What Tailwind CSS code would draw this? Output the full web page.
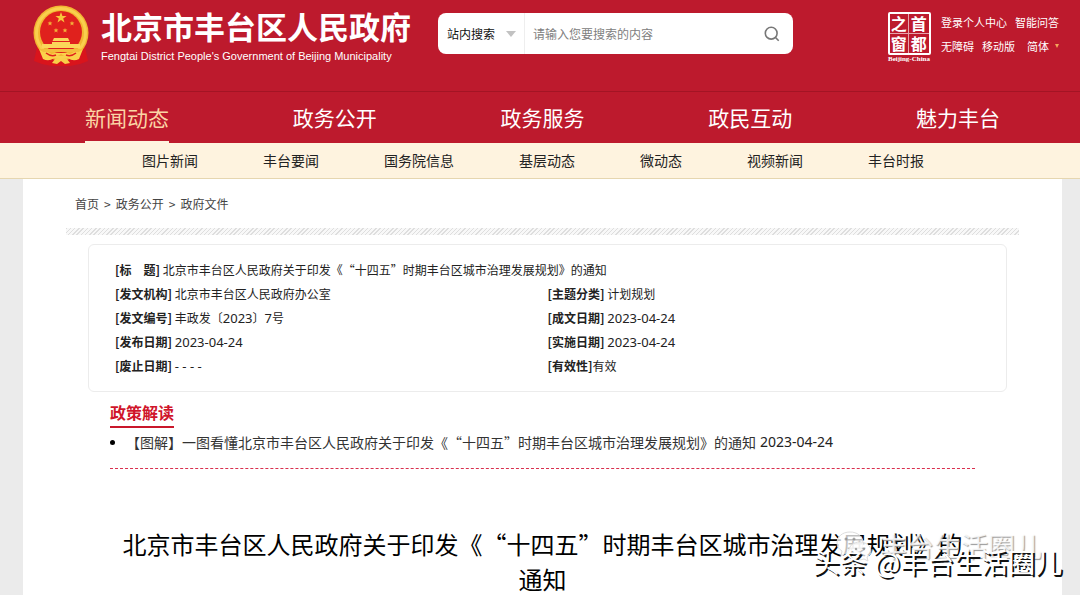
<!DOCTYPE html>
<html lang="zh-CN">
<head>
  <meta charset="UTF-8">
  <meta name="viewport" content="width=device-width, initial-scale=1.0">
  <title>北京市丰台区人民政府</title>
  <script src="https://cdn.jsdelivr.net/npm/@tailwindcss/browser@4"></script>
</head>
<body class="bg-[#ebebeb] font-['Noto_Sans_CJK_SC',sans-serif] text-[#222] [text-spacing-trim:space-all]">
<div class="relative min-h-screen flex flex-col overflow-hidden">

  <!-- Header -->
  <header class="bg-[#bd1a2d] text-white">
    <div class="flex items-start h-[91px] pl-[32px] pr-[18px]">
      <a href="#" class="flex items-start" aria-label="北京市丰台区人民政府">
        <svg class="w-[58px] h-[64px] mt-1" viewBox="0 0 58 64">
          <path d="M5 43L2 57l8 3 10 2h18l10-2 8-3-3-14z" fill="#d9141c"/>
          <circle cx="29" cy="29" r="27.500" fill="#f2b632"/>
          <circle cx="29" cy="29" r="24.500" fill="none" stroke="#f9cf4e" stroke-width="3"/>
          <circle cx="29" cy="28" r="21" fill="#e0211d"/>
          <path d="M29 8l1.400 4h4.200l-3.400 2.500 1.300 4-3.500-2.500-3.500 2.500 1.300-4-3.400-2.500h4.200z" fill="#f7c63c"/>
          <g fill="#f3b03a">
            <path id="star" d="M18 17l.7 1.600h1.700l-1.300 1.100.5 1.700-1.600-1-1.600 1 .5-1.700-1.300-1.100h1.700z"/>
            <use href="#star" x="22"/>
            <use href="#star" x="6" y="7"/>
            <use href="#star" x="15" y="7"/>
          </g>
          <path d="M22 34h14l1.500 3h-17zM20 38h18v2h10v4H10v-4h10z" fill="#fbd75a"/>
          <path d="M8 45h42l-3 3H11z" fill="#f4bd3d"/>
          <path d="M7 45q8 7 16 4h12q8 3 16-4l-4 10q-6 3-11-1l-7-4-7 4q-5 4-11 1z" fill="#fbd14b"/>
          <path d="M14 49q5 4 10 2M44 49q-5 4-10 2" stroke="#e0211d" stroke-width="1.500" fill="none"/>
          <path d="M20 59l3-4h12l3 4-5 1-4-3-4 3z" fill="#f8cf48"/>
        </svg>
        <div class="ml-[11px] pt-[7px]">
          <div class="text-[31px] leading-[38px] font-bold">北京市丰台区人民政府</div>
          <div class="text-[11px] leading-[22px] font-['Liberation_Sans',sans-serif] whitespace-nowrap">Fengtai District People's Government of Beijing Municipality</div>
        </div>
      </a>

      <form class="ml-[27px] mt-[13px] w-[355px] h-[41px] flex items-center bg-white rounded-lg text-[12px]">
        <div class="relative flex items-center w-[87px] h-full border-r border-[#eee]">
          <select aria-label="搜索范围" class="appearance-none w-full h-full pl-[9px] text-[#111] bg-transparent">
            <option>站内搜索</option>
          </select>
          <svg class="absolute right-2 w-[10px] h-[6px]" viewBox="0 0 10 6"><path d="M0 0h10L5 6z" fill="#c2c2c2"/></svg>
        </div>
        <input type="text" aria-label="搜索" placeholder="请输入您要搜索的内容" class="flex-1 min-w-0 h-full pl-2 text-[#333] placeholder:text-[#808080] outline-none">
        <button type="button" aria-label="搜索" class="w-[42px] h-full flex items-center justify-center">
          <svg class="w-4 h-4" viewBox="0 0 16 16" fill="none" stroke="#777" stroke-width="1.600"><circle cx="7.200" cy="7.200" r="5.900"/><path d="M11.500 11.500l3.200 3.200"/></svg>
        </button>
      </form>

      <div class="ml-auto flex items-start pt-3">
        <a href="#" class="w-[48px] flex flex-col items-center mr-2">
          <span class="w-[43px] h-[43px] border-2 border-white rounded-xs grid grid-cols-2 text-center text-[16px] leading-[19px] font-bold">
            <span class="border-r border-b border-white/60">之</span><span class="border-b border-white/60">首</span>
            <span class="border-r border-white/60">窗</span><span>都</span>
          </span>
          <span class="font-['Liberation_Serif',serif] font-bold text-[7px] leading-[8px] whitespace-nowrap">Beijing-China</span>
        </a>
        <div class="w-[121px] text-[11px] leading-5 whitespace-nowrap">
          <div class="flex gap-2">
            <a href="#">登录个人中心</a>
            <a href="#">智能问答</a>
          </div>
          <div class="flex gap-2 mt-1">
            <a href="#">无障碍</a>
            <a href="#">移动版</a>
            <button type="button" class="flex items-center gap-[6px] ml-1">简体
              <svg class="w-1 h-1" viewBox="0 0 4 4"><path d="M0 0h4L2 4z" fill="#f3a65a"/></svg>
            </button>
          </div>
        </div>
      </div>
    </div>

    <nav class="border-t border-[#a31424] pl-[23px] pr-[18px] grid grid-cols-5 justify-items-center text-[21px] leading-[50px]">
      <a href="#" class="h-[51px] text-[#fbd5a5] border-b-2 border-[#fef3df]">新闻动态</a>
      <a href="#">政务公开</a>
      <a href="#">政务服务</a>
      <a href="#">政民互动</a>
      <a href="#">魅力丰台</a>
    </nav>
  </header>

  <nav class="bg-[#fef3df] border-b border-[#e6d6b0] pl-[142px] pb-px flex gap-[65px] text-[14px] leading-[34px] whitespace-nowrap">
    <a href="#">图片新闻</a>
    <a href="#">丰台要闻</a>
    <a href="#">国务院信息</a>
    <a href="#">基层动态</a>
    <a href="#">微动态</a>
    <a href="#">视频新闻</a>
    <a href="#">丰台时报</a>
  </nav>

  <!-- Content -->
  <main class="flex-1 bg-white ml-[23px] mr-[18px] pl-[43px] pr-[43px] pt-[13px]">
    <div class="pl-[9px] flex gap-[5px] text-[12px] leading-6 text-[#444]">
      <a href="#">首页</a><span>&gt;</span>
      <a href="#">政务公开</a><span>&gt;</span>
      <a href="#">政府文件</a>
    </div>
    <div class="mt-3 h-[7px] bg-[repeating-linear-gradient(135deg,#dedede_0_1px,#f8f8f8_1px_3px)]"></div>

    <section class="mt-[9px] ml-[22px] mr-3 border border-[#ececec] rounded-md py-[13px] px-[26px] grid grid-cols-2 text-[12px] leading-6">
      <p class="col-span-2"><b>[标　题]</b> 北京市丰台区人民政府关于印发《“十四五”时期丰台区城市治理发展规划》的通知</p>
      <p><b>[发文机构]</b> 北京市丰台区人民政府办公室</p>
      <p><b>[主题分类]</b> 计划规划</p>
      <p><b>[发文编号]</b> 丰政发〔<span class="font-['Noto_Sans'] text-[13px]">2023</span>〕<span class="font-['Noto_Sans'] text-[13px]">7</span>号</p>
      <p><b>[成文日期]</b> <span class="font-['Noto_Sans'] text-[13px]">2023-04-24</span></p>
      <p><b>[发布日期]</b> <span class="font-['Noto_Sans'] text-[13px]">2023-04-24</span></p>
      <p><b>[实施日期]</b> <span class="font-['Noto_Sans'] text-[13px]">2023-04-24</span></p>
      <p><b>[废止日期]</b> <span class="font-['Noto_Sans'] text-[13px]">- - - -</span></p>
      <p><b>[有效性]</b>有效</p>
    </section>

    <div class="ml-11 mr-11">
      <h2 class="mt-2 w-fit border-b-2 border-[#c9172b] text-[#d0152b] text-[16px] leading-[24px] pb-[2px] font-bold">政策解读</h2>
      <ul class="mt-[2px] pb-[14px] border-b border-dashed border-[#d9304f] text-[14px] leading-6">
        <li class="flex items-center">
          <span class="w-[5px] h-[5px] rounded-full bg-black mr-[11px]"></span>
          <a href="#" class="text-[#333]">【图解】一图看懂北京市丰台区人民政府关于印发《“十四五”时期丰台区城市治理发展规划》的通知</a>
          <span class="ml-1 font-['Noto_Sans']">2023-04-24</span>
        </li>
      </ul>
      <h1 class="mt-[57px] text-center text-[24px] leading-[35px] text-black">北京市丰台区人民政府关于印发《“十四五”时期丰台区城市治理发展规划》的<span class="inline-block">通知</span></h1>
    </div>
  </main>

  <!-- Watermarks -->
  <div class="absolute right-[38px] bottom-[30px] flex items-center gap-2 text-[27px] leading-10 text-white/80 [text-shadow:1px_1px_1px_#999] whitespace-nowrap pointer-events-none">
    <svg class="w-[36px] h-[32px]" viewBox="0 0 36 32" fill="#fff" fill-opacity=".75" stroke="#ddd">
      <path d="M14 2C6 2 1 7 1 13c0 4 2 6 5 8l-1 5 5-3c10 2 17-3 17-10S21 2 14 2z"/>
      <path d="M24 12c-7 0-11 4-11 9s5 9 11 9l4-1 4 2-1-4c3-2 4-4 4-6 0-5-5-9-11-9z"/>
      <g fill="#888" stroke="none"><circle cx="10" cy="9" r="1.500"/><circle cx="18" cy="9" r="1.500"/><circle cx="20" cy="19" r="1.200"/><circle cx="28" cy="19" r="1.200"/></g>
    </svg>
    <span>丰台生活圈儿</span>
  </div>
  <div class="absolute right-[18px] bottom-[14px] flex gap-2 text-[27px] leading-10 text-white [text-shadow:2px_2px_0_#111] whitespace-nowrap pointer-events-none"><span>头条</span><span>@</span><span class="-ml-2">丰台生活圈儿</span></div>
</div>
</body>
</html>
